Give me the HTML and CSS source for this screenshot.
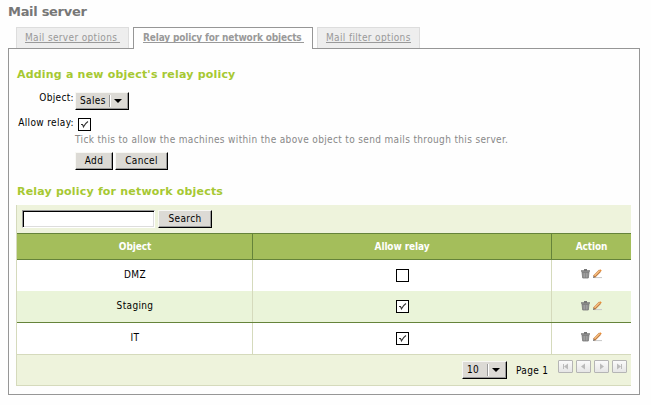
FILE: index.html
```html
<!DOCTYPE html>
<html lang="en">
<head>
<meta charset="utf-8">
<title>Mail server</title>
<link rel="stylesheet" href="styles.css">
</head>
<body>
<svg class="defs" width="0" height="0">
  <symbol id="tick" viewBox="0 0 11 11"><path d="M2 5.500h1.500L4.500 7.800C5.500 5.500 6.800 4 9 2.500" fill="none" stroke="#333" stroke-width="1.1"/></symbol>
  <symbol id="bin" viewBox="0 0 9 10"><path d="M3 .5h3M0 2h9" stroke="#777" stroke-width="1.4"/><path d="M1 3h7L7.3 9H1.7z" fill="#8c8c8c" stroke="#777" stroke-width=".8"/><path d="M3.200 4v4.500M5.800 4v4.500" stroke="#b5b5b5" stroke-width=".7"/></symbol>
  <symbol id="pen" viewBox="0 0 9 10"><path d="M1 8.600h8" stroke="#c8c8c8"/><path d="M1 7.800L7 1.800" stroke="#c07a40" stroke-width="3"/><path d="M1.500 6.700L6.500 1.700" stroke="#f8c080" stroke-width="1.4"/><path d="M6.300 1.100L7.200.2 8.800 1.700 7.800 2.600z" fill="#e9892f"/><path d="M0 9l.6-2 1.300 1.300z" fill="#555"/></symbol>
</svg>
<h1>Mail server</h1>
<nav class="tabs">
  <a class="tab t1"><span>Mail server options&nbsp;</span></a>
  <a class="tab t2 active"><span>Relay policy for network objects&nbsp;</span></a>
  <a class="tab t3"><span>Mail filter options</span></a>
</nav>
<main class="panel">
  <h2>Adding a new object's relay policy</h2>
  <form class="form">
    <div class="row object"><label>Object:</label><span class="raised select sales"><b>Sales</b><i></i></span></div>
    <div class="row allow"><label>Allow relay:</label><span class="check"><svg><use href="#tick"/></svg></span></div>
    <p class="help">Tick this to allow the machines within the above object to send mails through this server.</p>
    <div class="buttons"><span class="raised btn add">Add</span><span class="raised btn cancel">Cancel</span></div>
  </form>
  <h2 class="second">Relay policy for network objects</h2>
  <section class="table">
    <div class="search"><span class="field"></span><span class="raised btn find">Search</span></div>
    <div class="cells head"><span>Object</span><span>Allow relay</span><span>Action</span></div>
    <div class="cells"><span>DMZ</span><span><em class="check"></em></span><span class="act"><svg><use href="#bin"/></svg><svg><use href="#pen"/></svg></span></div>
    <div class="cells even"><span>Staging</span><span><em class="check"><svg><use href="#tick"/></svg></em></span><span class="act"><svg><use href="#bin"/></svg><svg><use href="#pen"/></svg></span></div>
    <div class="cells last"><span>IT</span><span><em class="check"><svg><use href="#tick"/></svg></em></span><span class="act"><svg><use href="#bin"/></svg><svg><use href="#pen"/></svg></span></div>
    <div class="pager">
      <span class="raised select count"><b>10</b><i></i></span><span class="page">Page 1</span>
      <span class="nav"><svg viewBox="0 0 13 11"><path d="M4 3v5h1V3zM9 2.500v6L5 5.500z"/></svg></span>
      <span class="nav"><svg viewBox="0 0 13 11"><path d="M8 2.500v6L4 5.500z"/></svg></span>
      <span class="nav"><svg viewBox="0 0 13 11"><path d="M5 2.500v6L9 5.500z"/></svg></span>
      <span class="nav"><svg viewBox="0 0 13 11"><path d="M8 3v5h1V3zM4 2.500v6L8 5.500z"/></svg></span>
    </div>
  </section>
</main>
</body>
</html>
```
FILE: styles.css
```css
* { box-sizing: border-box; }
body { margin: 0; padding: 4px 11px 0 8px; background: #fefefe; color: #000; font: 10px/12px "DejaVu Sans Condensed", "DejaVu Sans", sans-serif; letter-spacing: .35px; }
.defs { position: absolute; }
h1, h2 { margin: 0; font-family: "DejaVu Sans", sans-serif; font-weight: bold; white-space: nowrap; }
h1 { height: 23px; font-size: 13px; line-height: 16px; letter-spacing: -.3px; color: #777; }
h2 { font-size: 11px; line-height: 14px; letter-spacing: .2px; color: #a6c832; }
.tabs { display: flex; gap: 4px; height: 22px; padding-left: 8px; position: relative; }
.tab { height: 21px; padding: 4px 0 0 8px; border: 1px solid #ddd; border-bottom: 0; background: #eee; color: #999; white-space: nowrap; }
.tab span { border-bottom: 1px solid #999; display: inline-block; height: 11px; }
.t1 { width: 113px; }
.t2 { width: 180px; padding-left: 9px; }
.t3 { width: 103px; }
.active { height: 22px; border-color: #969696; background: #fefefe; font-weight: bold; letter-spacing: -.15px; }
.panel { height: 347px; margin-top: -1px; border: 1px solid #969696; padding: 19px 8px 0 7px; }
.panel h2 { margin-left: 1px; }
.form { height: 90px; padding-top: 10px; }
.row { display: flex; }
.row label { width: 58px; display: flex; justify-content: flex-end; white-space: nowrap; margin-right: 1px; letter-spacing: .35px; }
.object { height: 25px; }
.raised { display: inline-flex; align-items: center; height: 18px; border: 1px solid #f8f8f4; border-right-color: #000; border-bottom-color: #000; box-shadow: inset -1px -1px #999; background: #dcdad5; }
.btn { justify-content: center; }
.select b { font-weight: normal; padding-left: 4px; flex: 1; }
.select i { width: 19px; height: 12px; border-left: 1px solid #999; box-shadow: inset 1px 0 #fff; display: flex; align-items: center; padding-left: 4px; }
.select i::before { content: ""; border: 4px solid transparent; border-top-color: #000; border-bottom: 0; }
.sales { width: 54px; }
.check { width: 13px; height: 13px; border: 1px solid #000; background: #fff; display: inline-block; flex: none; }
.check svg { display: block; width: 11px; height: 11px; }
.allow .check { margin: 1px 0 0 3px; }
.allow { height: 17px; }
.help { margin: 0 0 0 59px; height: 18px; color: #888; white-space: nowrap; }
.buttons { display: flex; gap: 2px; padding-left: 59px; }
.add { width: 38px; }
.cancel { width: 53px; }
.form + h2 { margin-top: 13px; }
.table { margin-top: 6px; border-left: 1px solid #d5dabc; }
.search { height: 28px; background: #eef3dc; padding: 5px 5px 0; display: flex; gap: 3px; }
.field { width: 133px; height: 18px; background: #fff; border: 1px solid; border-color: #999 #fff #fff #999; box-shadow: inset 1px 1px #000, inset -1px -1px #ddd; }
.find { width: 54px; }
.cells { display: grid; grid-template-columns: 236px 299px 1fr; height: 31px; background: #fff; }
.cells > span { display: flex; align-items: center; justify-content: center; border-right: 1px solid #d5dabc; }
.cells > span:first-child { padding: 0 0 1px 1px; }
.cells > span:last-child { border-right: 0; }
.head { height: 27px; background: #a4be5b; color: #fff; font-weight: bold; letter-spacing: -.1px; border: solid #65833a; border-width: 1px 0; }
.head > span { border-color: #65833a; }
.head > span:first-child { padding-bottom: 0; }
.even { height: 32px; background: #eaf4d9; border-bottom: 1px solid #65833a; }
.last { height: 32px; border-bottom: 1px solid #d5dabc; }
.act { gap: 3px; }
.act svg { width: 9px; height: 10px; margin-top: -4px; }
.even .act svg { margin-top: -2px; }
.pager { height: 31px; background: #eef3dc; border-bottom: 1px solid #d5dabc; display: flex; justify-content: flex-end; gap: 3px; padding: 6px 4px 0 0; }
.count { width: 45px; }
.page { margin: 4px 5px 0 6px; width: 34px; white-space: nowrap; }
.nav { width: 15px; height: 13px; margin-top: -1px; border: 1px solid #b5b5b5; border-radius: 1px; background: linear-gradient(#fafafa, #e6e6e6); }
.nav svg { display: block; width: 13px; height: 11px; fill: #bbb; }
```
